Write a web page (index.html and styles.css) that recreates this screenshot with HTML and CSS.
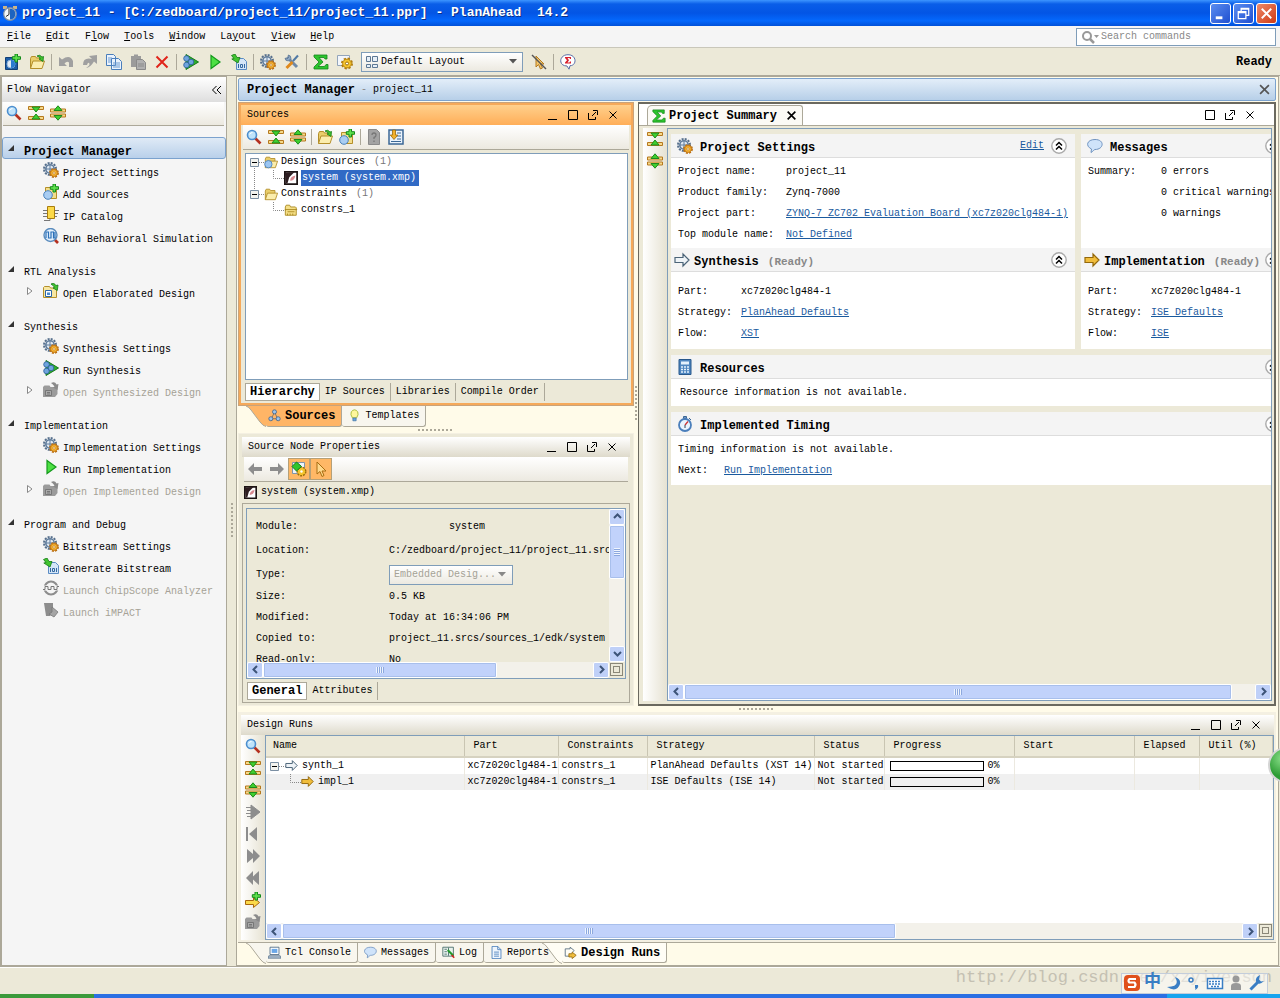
FILE: index.html
```
<!DOCTYPE html>
<html lang="en">
<head>
    <meta charset="UTF-8">
    <meta name="viewport" content="width=device-width, initial-scale=1.0">
    <title>project_11 - PlanAhead 14.2</title>
    <link rel="stylesheet" href="styles.css">
</head>
<body>

<!-- Icon sprite -->
<svg class="sprite" aria-hidden="true">
    <symbol id="i-app" viewBox="0 0 16 16"><path d="M1 1h4v3H1zM11 1h4v3h-4z" fill="#c8b48a"/><circle cx="8" cy="9" r="6.300" fill="#f4f7fa" stroke="#7f8fa3" stroke-width="1.200"/><path d="M8 3.500a5.500 5.500 0 0 1 0 11z" fill="#1d64c0"/><path d="M7 3.500v6l-3 2" fill="none" stroke="#222"/></symbol>
    <symbol id="i-search" viewBox="0 0 16 16"><path d="M9 9l5.500 5.500" stroke="#b5301f" stroke-width="2.600"/><circle cx="6" cy="6" r="4.500" fill="#bfe3fb" stroke="#4d8fcf" stroke-width="1.600"/><path d="M3.500 5.500q1-2 3-2" stroke="#fff" fill="none"/></symbol>
    <symbol id="i-collapse" viewBox="0 0 16 16"><path d="M.5 1.500h15v3h-15zM.5 11.500h15v3h-15z" fill="#f7d98a" stroke="#b5791e"/><path d="M4 2h8L8 7z" fill="#3fcf2f" stroke="#1c8a1c"/><path d="M4 14h8L8 9z" fill="#3fcf2f" stroke="#1c8a1c"/></symbol>
    <symbol id="i-expand" viewBox="0 0 16 16"><path d="M.5 4h15v3h-15zM.5 9h15v3h-15z" fill="#f7d98a" stroke="#b5791e"/><path d="M4 5.500h8L8 .8zM4 10.500h8L8 15.200z" fill="#3fcf2f" stroke="#1c8a1c"/></symbol>
    <symbol id="i-gears" viewBox="0 0 16 16"><circle cx="7" cy="7" r="6" fill="none" stroke="#566f8c" stroke-width="2" stroke-dasharray="2 1.140"/><circle cx="7" cy="7" r="4.200" fill="#dfe8f2" stroke="#5f7c9c" stroke-width="1.600"/><path d="M7 3v8M3 7h8" stroke="#5f7c9c"/><circle cx="11" cy="11" r="4" fill="none" stroke="#b56a10" stroke-width="1.800" stroke-dasharray="2 1.140"/><circle cx="11" cy="11" r="3.400" fill="#f7b733" stroke="#c97b14"/><circle cx="11" cy="11" r="1.200" fill="#fff6dc" stroke="#b56a10" stroke-width=".6"/></symbol>
    <symbol id="i-gearpage" viewBox="0 0 16 16"><path d="M.5 1.500h12v10H.5z" fill="#f3f6fb" stroke="#93a5bb"/><circle cx="10" cy="9.500" r="5" fill="none" stroke="#b07a0c" stroke-width="2" stroke-dasharray="2.200 1.730"/><circle cx="10" cy="9.500" r="4.400" fill="#f5c42c" stroke="#b8860f"/><circle cx="10" cy="9.500" r="1.500" fill="#fff" stroke="#9c6f0a"/></symbol>
    <symbol id="i-plus" viewBox="0 0 16 16"><path d="M10 0h2.500v2.700h3v2.600h-3V8H10V5.300H7.300V2.700H10z" fill="#5ee04c" stroke="#138a1a"/></symbol>
    <symbol id="i-newproj" viewBox="0 0 16 16"><path d="M.5 3.500h12v12H.5z" fill="#1c5da6" stroke="#123f75"/><circle cx="6" cy="10" r="4" fill="#dfeaf5" stroke="#8fb3d8"/><path d="M6 6a4 4 0 0 1 0 8z" fill="#2a7bd0"/><use href="#i-plus"/></symbol>
    <symbol id="i-folder" viewBox="0 0 16 16"><path d="M1.500 14.500V4.500l1-2h4l1 1.500h5v3" fill="#e9cd6a" stroke="#b48f2a"/><path d="M1.500 14.500L4 7h11.500L13 14.500z" fill="#fbedad" stroke="#b48f2a"/></symbol>
    <symbol id="i-folder-src" viewBox="0 0 16 16"><use href="#i-folder"/><circle cx="5" cy="10.500" r="4.200" fill="#9cc6f2" stroke="#4a82bd"/></symbol>
    <symbol id="i-open" viewBox="0 0 16 16"><use href="#i-folder"/><path d="M8 2q3-2 5 1l1.500-.5-.5 5L10 5l1.500-.7Q10 2.500 8 2z" fill="#41c42f" stroke="#157a17" stroke-width=".8"/></symbol>
    <symbol id="i-addsrc" viewBox="0 0 16 16"><path d="M2.500 3.500h9l2 2v9h-11z" fill="#f3dd8b" stroke="#b48f2a"/><circle cx="5" cy="11" r="4.300" fill="#a9cdf2" stroke="#4a82bd"/><use href="#i-plus"/></symbol>
    <symbol id="i-undo" viewBox="0 0 16 16"><path d="M1 3v9h8L6.500 9.500q2.500-3 4.500-1V13h4V7Q12 0 4 5.500z" fill="#a0a0a0"/></symbol>
    <symbol id="i-redo" viewBox="0 0 16 16"><path d="M15 1v9l-3-2.500Q8 14 4 14q5-3 3-5-1-1-2 2H1Q1 3 10 5L7 2z" fill="#a0a0a0"/></symbol>
    <symbol id="i-copy" viewBox="0 0 16 16"><path d="M.5.5h7l2 2v9h-9zM5.500 4.500h7l3 3v8h-10z" fill="#eaf2fc" stroke="#4a7ebb"/><path d="M2 4h4M2 6h3M2 8h3M7 9h7M7 11h7M7 13h7" stroke="#6d9bd1"/></symbol>
    <symbol id="i-paste" viewBox="0 0 16 16"><path d="M1 2h3V.5h4V2h3v11H1z" fill="#9b9b9b"/><path d="M6.500 5.500h6l3 3v7h-9z" fill="#b0b0b0" stroke="#8a8a8a"/><path d="M8 10h6M8 12h6" stroke="#8a8a8a"/></symbol>
    <symbol id="i-delete" viewBox="0 0 16 16"><path d="M2.500 2.500l11 11M13.500 2.500l-11 11" stroke="#e0251b" stroke-width="2"/></symbol>
    <symbol id="i-synth" viewBox="0 0 16 16"><path d="M3 .5L15.500 8 3 15.500z" fill="#2fae2c" stroke="#167a1a"/><g fill="#6fa5de" stroke="#2b5d9c" stroke-width=".8"><circle cx="3.500" cy="4.500" r="2.800"/><circle cx="3.500" cy="11" r="2.800"/><circle cx="8" cy="8" r="2.800"/></g></symbol>
    <symbol id="i-run" viewBox="0 0 16 16"><path d="M4 1.500L13 8l-9 6.500z" fill="#4de043" stroke="#149a1c" stroke-width="1.200"/></symbol>
    <symbol id="i-bits" viewBox="0 0 16 16"><path d="M5.500 4.500h7l3 3v8h-10z" fill="#d5e6f8" stroke="#5b8cc4"/><path d="M7.500 10v4M13.500 10v4M9.500 10.500h2v3h-2z" fill="none" stroke="#34689f"/><path d="M.5 1.500L4 0l2 3.500h3L7 9 .800 5 3 4.500z" fill="#41c42f" stroke="#157a17" stroke-width=".8"/></symbol>
    <symbol id="i-tools" viewBox="0 0 16 16"><path d="M3 3l10 10" stroke="#6f8aa8" stroke-width="3"/><path d="M1 4q0 3 3.500 3L7 4.500Q7 1 4 1l1 2-2 2z" fill="#8ea7c2" stroke="#54708f" stroke-width=".7"/><path d="M14 1.500l-5 5.500" stroke="#5079a5" stroke-width="2"/><path d="M8.500 8l-6 6" stroke="#e08a1c" stroke-width="3"/></symbol>
    <symbol id="i-sigma" viewBox="0 0 16 16"><path d="M1 1h13v4h-2L11 3.500H6L10 8l-5 4.500h6.500L13 10.500h2V15H1v-2l5-5L1 3z" fill="#2dc52d" stroke="#12831b" stroke-width=".8"/></symbol>
    <symbol id="i-layout" viewBox="0 0 16 16"><path d="M2.500 2.500h4v5h-4zM8.500 2.500h5v5h-5zM2.500 10.500h4v3h-4zM8.500 10.500h5v3h-5z" fill="#e8f0f8" stroke="#5d7894"/></symbol>
    <symbol id="i-nocursor" viewBox="0 0 16 16"><path d="M5 2v11l2.500-2.500L9.500 15l2-1-2-4H13z" fill="#f4c76b" stroke="#b37a20"/><path d="M1 1l14 14" stroke="#555" stroke-width="1.400"/></symbol>
    <symbol id="i-feedback" viewBox="0 0 16 16"><path d="M8 .7c9 0 9 11 2 11l-1 3.500L7 12C-2 12-1 .7 8 .7z" fill="#fff" stroke="#5c6fa8"/><path d="M5 3h6v2h-1l-.5-1H7.500L9 6.200 7.500 8.500h2L10 7.500h1v2H5v-1l2-2.300L5 4z" fill="#d9202d"/></symbol>
    <symbol id="i-ip" viewBox="0 0 16 16"><path d="M0 4.500h16M0 7.500h5M11 7.500h4M0 10.500h14" stroke="#777"/><path d="M4.500.5h7v12h-7z" fill="#fbd949" stroke="#a97c0d"/><path d="M1 14.500h6v-2" fill="none" stroke="#777"/></symbol>
    <symbol id="i-sim" viewBox="0 0 16 16"><path d="M11 11l4 4" stroke="#b5301f" stroke-width="2.600"/><circle cx="7.500" cy="7" r="6.500" fill="#e4f1fd" stroke="#5b8cbd" stroke-width="1.400"/><path d="M3 10V4h2.500v6H8V4h2.500v6H12V4" fill="none" stroke="#2b70b8" stroke-width="1.200"/></symbol>
    <symbol id="i-opendes" viewBox="0 0 16 16"><path d="M.5 14.500v-10l1-1h5l1 1.500h6v9.500z" fill="#f7e7a2" stroke="#b48f2a"/><path d="M2.500 7.500h6v6h-6z" fill="#fff" stroke="#2d66a5"/><path d="M4 9.500h3v2.500H4z" fill="#4a8bd0"/><path d="M8 1q3-2 5 1.500l2-.5-.7 5.500L10 5l1.500-.7Q10 2 8 1z" fill="#41c42f" stroke="#157a17" stroke-width=".8"/></symbol>
    <symbol id="i-opengray" viewBox="0 0 16 16"><path d="M0 15V5l1.500-1.500h5l1 1.500h7v7L12 15z" fill="#9b9b9b"/><path d="M2.500 8.500h6v5h-6z" fill="#aaa" stroke="#777"/><path d="M4 10.500h3M4 12h3" stroke="#777"/><path d="M8 1q4-2 5.500 1.500L15.500 2 14.500 8 10 5.500l1.500-1Q10 2 8 1z" fill="#8a8a8a"/></symbol>
    <symbol id="i-chip" viewBox="0 0 16 16"><circle cx="8" cy="8" r="6.500" fill="none" stroke="#8d8d8d" stroke-width="2.200"/><path d="M0 5.500h16v5H0z" fill="#f5f5f5"/><path d="M0 9.500h2v-3h3v3h3v-3h3v3h3v-3h2" fill="none" stroke="#777"/></symbol>
    <symbol id="i-impact" viewBox="0 0 16 16"><path d="M1 1h9v9l-3 4H3z" fill="#8d8d8d"/><path d="M9 5l6 5-4 5-5-3 3-2z" fill="#a5a5a5" stroke="#777" stroke-width=".8"/></symbol>
    <symbol id="i-help" viewBox="0 0 16 16"><path d="M2.500.5h8l3 3v12h-11z" fill="#a3a3a3" stroke="#8a8a8a"/><path d="M6 6q0-2 2-2t2 2-2 2.500V10M8 11.500v1.500" fill="none" stroke="#777" stroke-width="1.300"/></symbol>
    <symbol id="i-autoload" viewBox="0 0 16 16"><path d="M1 1h14v14H1z" fill="#e9f2fb" stroke="#3c6896" stroke-width="1.500"/><path d="M9 4h4M9 7h4M9 10h4M3 12.500h10" stroke="#3c6896"/><path d="M4.500 1h3v5h2.300L6 10.500 2.300 6h2.200z" fill="#f2b12c" stroke="#9b6b0d" stroke-width=".8"/></symbol>
    <symbol id="i-xmp" viewBox="0 0 16 16"><path d="M1 1h14v14H1z" fill="#fff" stroke="#1d1414" stroke-width="2"/><path d="M1 2l11-1-6 6-2 7H2z" fill="#2d1d20"/><path d="M7 11q0-5 6-6-1 6-6 6z" fill="#d98a90"/></symbol>
    <symbol id="i-constr" viewBox="0 0 16 16"><path d="M1.500 14V4.500l1-2h4l1 2h5.500l1 1V14z" fill="#f5df87" stroke="#a8871d"/><path d="M1 7.500h14M4 10h8M4 14v-2M7 14v-2M10 14v-2" stroke="#a8871d"/></symbol>
    <symbol id="i-tree" viewBox="0 0 16 16"><path d="M8 4L4 12h8z" fill="none" stroke="#666"/><g fill="#9cc3ec" stroke="#41648a"><circle cx="8" cy="3.500" r="2.500"/><circle cx="3.500" cy="12" r="2.500"/><circle cx="12.500" cy="12" r="2.500"/></g></symbol>
    <symbol id="i-bulb" viewBox="0 0 16 16"><path d="M5.500 11Q2.500 7 4 3.500 8-1.500 12 3.500 13.500 7 10.500 11z" fill="#fff79c" stroke="#9db32c"/><path d="M6 11h4v3.500H6z" fill="#6aa7df" stroke="#3b6d9e" stroke-width=".8"/></symbol>
    <symbol id="i-left" viewBox="0 0 16 16"><path d="M1 8l6-6v4h8v4H7v4z" fill="#8d8d8d"/></symbol>
    <symbol id="i-right" viewBox="0 0 16 16"><path d="M15 8L9 2v4H1v4h8v4z" fill="#8d8d8d"/></symbol>
    <symbol id="i-autofit" viewBox="0 0 16 16"><path d="M1.500 1.500h12v11h-12z" fill="#eef4fa" stroke="#8095ab"/><circle cx="10.500" cy="10.500" r="4.300" fill="#f5c42c" stroke="#9c6f0a" stroke-width="1.400" stroke-dasharray="2 1"/><circle cx="10.500" cy="10.500" r="1.200" fill="#fff"/><path d="M5.500 1l5 4.500-5 4.500L1 5.500z" fill="#31c52b" stroke="#157a17"/></symbol>
    <symbol id="i-cursor" viewBox="0 0 16 16"><path d="M4 1v12l3-2.500 2 5 2-1-2-4.500h4z" fill="#ffd98c" stroke="#a86d12"/></symbol>
    <symbol id="i-arrow-w" viewBox="0 0 16 16"><path d="M1 5.500h8V2l6 6-6 6v-3.500H1z" fill="#eef3f7" stroke="#4b6478" stroke-width="1.200"/></symbol>
    <symbol id="i-arrow-y" viewBox="0 0 16 16"><path d="M1 5.500h8V2l6 6-6 6v-3.500H1z" fill="#f0bd3c" stroke="#94690d" stroke-width="1.200"/></symbol>
    <symbol id="i-newrun" viewBox="0 0 16 16"><path d="M.5 8.500h8V5.500l6 5-6 5v-3h-8z" fill="#fbd949" stroke="#a9660d"/><use href="#i-plus"/></symbol>
    <symbol id="i-bubble" viewBox="0 0 16 16"><path d="M8 1.500c10 0 9 10 0 10-1 0-2 2-4 3l.5-3.500C-2 8 0 1.500 8 1.500z" fill="#cfe3fa" stroke="#6f93c0"/></symbol>
    <symbol id="i-calc" viewBox="0 0 16 16"><path d="M2 .5h12v15H2z" fill="#4f86c0" stroke="#28588c"/><path d="M4 2.500h8v3H4z" fill="#e4f1fd"/><path d="M4 8h8M4 10.500h8M4 13h8" stroke="#e4f1fd" stroke-width="1.500" stroke-dasharray="2 1"/></symbol>
    <symbol id="i-clock" viewBox="0 0 16 16"><path d="M6.500.5h3v2h-3zM12 2l2 2" fill="#6f93c0" stroke="#3c6896"/><circle cx="8" cy="9" r="6" fill="#e9f4fe" stroke="#4a7ebb" stroke-width="1.800"/><path d="M8 9l3-3.500" stroke="#c33" stroke-width="1.300"/><path d="M8 9v3" stroke="#345"/></symbol>
    <symbol id="i-steps" viewBox="0 0 16 16"><path d="M6 1l9 7-9 7zM1 3.500h5M2 6.500h4M1 9.500h5M2 12.500h4" fill="#8d8d8d" stroke="#8d8d8d"/></symbol>
    <symbol id="i-first" viewBox="0 0 16 16"><path d="M1 1h2v14H1zM12 1v14L4 8z" fill="#8d8d8d"/></symbol>
    <symbol id="i-fwd" viewBox="0 0 16 16"><path d="M2 1l6 5V1l7 7-7 7v-5l-6 5z" fill="#8d8d8d"/></symbol>
    <symbol id="i-back" viewBox="0 0 16 16"><path d="M14 1L8 6.500V1L1 8l7 7V9.500l6 5.500z" fill="#8d8d8d"/></symbol>
    <symbol id="i-console" viewBox="0 0 16 16"><path d="M2.500 1.500h11v9h-11z" fill="#fff" stroke="#44617f"/><path d="M4.500 3.500h7v5h-7z" fill="#6aa7e8"/><path d="M1 12h14l1 3H0z" fill="#aebfd0" stroke="#44617f" stroke-width=".8"/></symbol>
    <symbol id="i-log" viewBox="0 0 16 16"><path d="M1 1.500h13v11H1z" fill="#e9f2ee" stroke="#3c6260"/><path d="M3 4h3M3 7h3M3 10h3M8 2v10" stroke="#3c6260"/><path d="M7 5l7 7" stroke="#249a2c" stroke-width="2.500"/><path d="M12 11l3 3.500" stroke="#c22" stroke-width="2"/></symbol>
    <symbol id="i-report" viewBox="0 0 16 16"><path d="M2.500.5h7l4 4v11h-11z" fill="#eef5fd" stroke="#3f78b8"/><path d="M9.500.5v4h4M5 7.500h6M5 10h6M5 12.500h6" fill="none" stroke="#3f78b8"/></symbol>
    <symbol id="i-runs" viewBox="0 0 16 16"><path d="M1.500 3.500h6v-2l5 4-2 2M1.500 3.500v9h5" fill="none" stroke="#4b6478"/><path d="M6 9.500h4v-2l5 4-5 4v-2H6z" fill="#f0bd3c" stroke="#94690d"/></symbol>
    <symbol id="i-min" viewBox="0 0 10 10"><path d="M0 9.500h9" stroke="#000"/></symbol>
    <symbol id="i-max" viewBox="0 0 10 10"><path d="M.5.5h9v9h-9z" fill="none" stroke="#000"/></symbol>
    <symbol id="i-float" viewBox="0 0 10 10"><path d="M.5 3v6.500h7V7M4 6l4-4M5 .5h4.500V5" fill="none" stroke="#000"/></symbol>
    <symbol id="i-close" viewBox="0 0 10 10"><path d="M1.500 1.500l7 7M8.500 1.500l-7 7" stroke="#000"/></symbol>
    <symbol id="i-chev" viewBox="0 0 16 16"><circle cx="8" cy="8" r="7.200" fill="#fff" stroke="#aaa" stroke-width="1.400"/><path d="M5 7.500l3-3 3 3M5 11.500l3-3 3 3" fill="none" stroke="#000" stroke-width="1.500"/></symbol>
    <symbol id="i-slant" viewBox="0 0 20 21"><path d="M0 0q3 1 5 4l9 12q3 4 6 4.500V0z" fill="var(--tab-fill)"/><path d="M0 0q3 1 5 4l9 12q3 4 6 4.500" fill="none" stroke="#aca899"/></symbol>
</svg>

<div class="app">

    <header class="titlebar">
        <svg class="ic"><use href="#i-app"/></svg>
        <h1>project_11 - [C:/zedboard/project_11/project_11.ppr] - PlanAhead&nbsp; 14.2</h1>
        <button class="win-btn" aria-label="Minimize"><svg viewBox="0 0 20 20"><path d="M5 13h7v3H5z" fill="#fff"/></svg></button>
        <button class="win-btn" aria-label="Restore"><svg viewBox="0 0 20 20"><path d="M7.500 8V4.500h8V12H12M4.500 8h8v7.500h-8zM4.500 9h8M7.500 5.500h8" fill="none" stroke="#fff" stroke-width="1.300"/></svg></button>
        <button class="win-btn win-close" aria-label="Close"><svg viewBox="0 0 20 20"><path d="M5 5l10 10M15 5L5 15" stroke="#fff" stroke-width="2"/></svg></button>
    </header>

    <nav class="menubar">
        <button><u>F</u>ile</button>
        <button><u>E</u>dit</button>
        <button>F<u>l</u>ow</button>
        <button><u>T</u>ools</button>
        <button><u>W</u>indow</button>
        <button>La<u>y</u>out</button>
        <button><u>V</u>iew</button>
        <button><u>H</u>elp</button>
        <label class="search">
            <svg viewBox="0 0 20 14"><circle cx="6" cy="6" r="4" fill="none" stroke="#999" stroke-width="2"/><path d="M9 9l4 4" stroke="#999" stroke-width="2.500"/><path d="M13 5h5l-2.500 3z" fill="#999"/></svg>
            <input type="text" placeholder="Search commands" aria-label="Search commands">
        </label>
    </nav>

    <div class="toolbar">
        <button aria-label="New project"><svg class="ic"><use href="#i-newproj"/></svg></button>
        <button aria-label="Open project"><svg class="ic"><use href="#i-open"/></svg></button>
        <span class="sep"></span>
        <button aria-label="Undo"><svg class="ic"><use href="#i-undo"/></svg></button>
        <button aria-label="Redo"><svg class="ic"><use href="#i-redo"/></svg></button>
        <button aria-label="Copy"><svg class="ic"><use href="#i-copy"/></svg></button>
        <button aria-label="Paste"><svg class="ic"><use href="#i-paste"/></svg></button>
        <button aria-label="Delete"><svg class="ic"><use href="#i-delete"/></svg></button>
        <span class="sep"></span>
        <button aria-label="Run synthesis"><svg class="ic"><use href="#i-synth"/></svg></button>
        <button aria-label="Run implementation"><svg class="ic"><use href="#i-run"/></svg></button>
        <button aria-label="Generate bitstream"><svg class="ic"><use href="#i-bits"/></svg></button>
        <span class="sep"></span>
        <button aria-label="Project settings"><svg class="ic"><use href="#i-gears"/></svg></button>
        <button aria-label="Options"><svg class="ic"><use href="#i-tools"/></svg></button>
        <span class="sep"></span>
        <button aria-label="Project summary"><svg class="ic"><use href="#i-sigma"/></svg></button>
        <button aria-label="Layout settings"><svg class="ic"><use href="#i-gearpage"/></svg></button>
        <label class="combo layout-combo">
            <svg class="ic"><use href="#i-layout"/></svg>
            <select aria-label="Layout"><option>Default Layout</option></select>
            <svg class="arrow" viewBox="0 0 8 5"><path d="M0 0h8L4 4.500z" fill="#555"/></svg>
        </label>
        <button aria-label="Unselect"><svg class="ic"><use href="#i-nocursor"/></svg></button>
        <span class="sep"></span>
        <button aria-label="Feedback"><svg class="ic"><use href="#i-feedback"/></svg></button>
        <span class="ready">Ready</span>
    </div>

    <main class="main">

        <!-- Flow Navigator -->
        <aside class="navigator">
            <div class="nav-head"><h2>Flow Navigator</h2><button aria-label="Hide navigator"><svg viewBox="0 0 10 10"><path d="M4.500 1l-4 4 4 4M9 1L5 5l4 4" fill="none" stroke="#000"/></svg></button></div>
            <div class="nav-tools">
                <button aria-label="Search"><svg class="ic"><use href="#i-search"/></svg></button>
                <button aria-label="Collapse all"><svg class="ic"><use href="#i-collapse"/></svg></button>
                <button aria-label="Expand all"><svg class="ic"><use href="#i-expand"/></svg></button>
            </div>
            <section class="nav-group">
                <h3 class="selected"><svg class="tri" viewBox="0 0 6 6"><path d="M6 0v6H0z"/></svg><span>Project Manager</span></h3>
                <a href="#"><svg class="ic"><use href="#i-gears"/></svg><span>Project Settings</span></a>
                <a href="#"><svg class="ic"><use href="#i-addsrc"/></svg><span>Add Sources</span></a>
                <a href="#"><svg class="ic"><use href="#i-ip"/></svg><span>IP Catalog</span></a>
                <a href="#"><svg class="ic"><use href="#i-sim"/></svg><span>Run Behavioral Simulation</span></a>
            </section>
            <section class="nav-group">
                <h3><svg class="tri" viewBox="0 0 6 6"><path d="M6 0v6H0z"/></svg><span>RTL Analysis</span></h3>
                <a href="#" class="closed"><svg class="exp" viewBox="0 0 6 8"><path d="M.5.5L5 4 .5 7.500z"/></svg><svg class="ic"><use href="#i-opendes"/></svg><span>Open Elaborated Design</span></a>
            </section>
            <section class="nav-group">
                <h3><svg class="tri" viewBox="0 0 6 6"><path d="M6 0v6H0z"/></svg><span>Synthesis</span></h3>
                <a href="#"><svg class="ic"><use href="#i-gears"/></svg><span>Synthesis Settings</span></a>
                <a href="#"><svg class="ic"><use href="#i-synth"/></svg><span>Run Synthesis</span></a>
                <a href="#" class="closed disabled"><svg class="exp" viewBox="0 0 6 8"><path d="M.5.5L5 4 .5 7.500z"/></svg><svg class="ic"><use href="#i-opengray"/></svg><span>Open Synthesized Design</span></a>
            </section>
            <section class="nav-group">
                <h3><svg class="tri" viewBox="0 0 6 6"><path d="M6 0v6H0z"/></svg><span>Implementation</span></h3>
                <a href="#"><svg class="ic"><use href="#i-gears"/></svg><span>Implementation Settings</span></a>
                <a href="#"><svg class="ic"><use href="#i-run"/></svg><span>Run Implementation</span></a>
                <a href="#" class="closed disabled"><svg class="exp" viewBox="0 0 6 8"><path d="M.5.5L5 4 .5 7.500z"/></svg><svg class="ic"><use href="#i-opengray"/></svg><span>Open Implemented Design</span></a>
            </section>
            <section class="nav-group">
                <h3><svg class="tri" viewBox="0 0 6 6"><path d="M6 0v6H0z"/></svg><span>Program and Debug</span></h3>
                <a href="#"><svg class="ic"><use href="#i-gears"/></svg><span>Bitstream Settings</span></a>
                <a href="#"><svg class="ic"><use href="#i-bits"/></svg><span>Generate Bitstream</span></a>
                <a href="#" class="disabled"><svg class="ic"><use href="#i-chip"/></svg><span>Launch ChipScope Analyzer</span></a>
                <a href="#" class="disabled"><svg class="ic"><use href="#i-impact"/></svg><span>Launch iMPACT</span></a>
            </section>
        </aside>

        <div class="splitter"><span class="grip grip-v"></span></div>

        <div class="workspace">
            <div class="view-bar">
                <strong>Project Manager</strong><span class="muted">-</span><span>project_11</span>
                <button aria-label="Close view"><svg viewBox="0 0 10 10"><path d="M1 1l8 8M9 1L1 9" stroke="#555" stroke-width="1.500"/></svg></button>
            </div>

            <div class="upper">
                <div class="left-col">

                    <!-- Sources -->
                    <section class="panel sources">
                        <div class="panel-head"><h2>Sources</h2>
                            <button aria-label="Minimize"><svg><use href="#i-min"/></svg></button>
                            <button aria-label="Maximize"><svg><use href="#i-max"/></svg></button>
                            <button aria-label="Float"><svg><use href="#i-float"/></svg></button>
                            <button aria-label="Close"><svg><use href="#i-close"/></svg></button>
                        </div>
                        <div class="panel-tools">
                            <button aria-label="Search"><svg class="ic"><use href="#i-search"/></svg></button>
                            <button aria-label="Collapse all"><svg class="ic"><use href="#i-collapse"/></svg></button>
                            <button aria-label="Expand all"><svg class="ic"><use href="#i-expand"/></svg></button>
                            <span class="sep"></span>
                            <button aria-label="Open"><svg class="ic"><use href="#i-open"/></svg></button>
                            <button aria-label="Add sources"><svg class="ic"><use href="#i-addsrc"/></svg></button>
                            <span class="sep"></span>
                            <button aria-label="Help"><svg class="ic"><use href="#i-help"/></svg></button>
                            <button aria-label="Auto scroll"><svg class="ic"><use href="#i-autoload"/></svg></button>
                        </div>
                        <ul class="tree">
                            <li><svg class="lead" viewBox="0 0 17 16"><path d="M5.500 12v4M10 8.500h7" class="dots"/><path d="M1.500 4.500h8v8h-8z" fill="#f3f3ee" stroke="#7b8fa3"/><path d="M3 8.500h5" stroke="#000"/></svg><svg class="ic14"><use href="#i-folder-src"/></svg>Design Sources <i>(1)</i></li>
                            <li><svg class="lead lead-2" viewBox="0 0 37 16"><path d="M5.500 0v16M24.500 0v8.500H37" class="dots"/></svg><svg class="ic14"><use href="#i-xmp"/></svg><b>system (system.xmp)</b></li>
                            <li><svg class="lead" viewBox="0 0 17 16"><path d="M5.500 0v4M10 8.500h7" class="dots"/><path d="M1.500 4.500h8v8h-8z" fill="#f3f3ee" stroke="#7b8fa3"/><path d="M3 8.500h5" stroke="#000"/></svg><svg class="ic14"><use href="#i-folder"/></svg>Constraints <i>(1)</i></li>
                            <li><svg class="lead lead-2" viewBox="0 0 37 16"><path d="M24.500 0v8.500H37" class="dots"/></svg><svg class="ic14"><use href="#i-constr"/></svg>constrs_1</li>
                        </ul>
                        <div class="subtabs">
                            <button class="active">Hierarchy</button><button>IP Sources</button><button>Libraries</button><button>Compile Order</button>
                        </div>
                    </section>
                    <div class="tabs dock-tabs">
                        <button class="tab active"><svg class="slant"><use href="#i-slant"/></svg><span><svg class="ic12"><use href="#i-tree"/></svg>Sources</span></button>
                        <button class="tab"><span><svg class="ic12"><use href="#i-bulb"/></svg>Templates</span></button>
                    </div>
                    <div class="row-grip"><span class="grip"></span></div>

                    <!-- Source Node Properties -->
                    <section class="panel props">
                        <div class="panel-head"><h2>Source Node Properties</h2>
                            <button aria-label="Minimize"><svg><use href="#i-min"/></svg></button>
                            <button aria-label="Maximize"><svg><use href="#i-max"/></svg></button>
                            <button aria-label="Float"><svg><use href="#i-float"/></svg></button>
                            <button aria-label="Close"><svg><use href="#i-close"/></svg></button>
                        </div>
                        <div class="panel-tools">
                            <button aria-label="Back"><svg class="ic"><use href="#i-left"/></svg></button>
                            <button aria-label="Forward"><svg class="ic"><use href="#i-right"/></svg></button>
                            <button class="on" aria-label="Fit selection"><svg class="ic"><use href="#i-autofit"/></svg></button>
                            <button class="on" aria-label="Select"><svg class="ic"><use href="#i-cursor"/></svg></button>
                        </div>
                        <div class="props-name"><svg class="ic12"><use href="#i-xmp"/></svg>system (system.xmp)</div>
                        <div class="props-box">
                            <div class="scroll-area">
                                <dl class="props-list">
                                    <dt>Module:</dt><dd class="module">system</dd>
                                    <dt>Location:</dt><dd>C:/zedboard/project_11/project_11.srcs</dd>
                                    <dt>Type:</dt><dd><label class="combo type-combo"><select disabled aria-label="Type"><option>Embedded Desig...</option></select><svg class="arrow" viewBox="0 0 8 5"><path d="M0 0h8L4 4.500z" fill="#888"/></svg></label></dd>
                                    <dt>Size:</dt><dd>0.5 KB</dd>
                                    <dt>Modified:</dt><dd>Today at 16:34:06 PM</dd>
                                    <dt>Copied to:</dt><dd>project_11.srcs/sources_1/edk/system</dd>
                                    <dt>Read-only:</dt><dd>No</dd>
                                </dl>
                                <div class="vscroll">
                                    <button aria-label="Scroll up"><svg viewBox="0 0 9 9"><path d="M1 6l3.500-3.500L8 6"/></svg></button>
                                    <div class="track"><div class="thumb" style="height:45%"></div></div>
                                    <button aria-label="Scroll down"><svg viewBox="0 0 9 9"><path d="M1 3l3.500 3.500L8 3"/></svg></button>
                                </div>
                                <div class="hscroll">
                                    <button aria-label="Scroll left"><svg viewBox="0 0 9 9"><path d="M6 1L2.500 4.500 6 8"/></svg></button>
                                    <div class="track"><div class="thumb" style="width:71%"></div></div>
                                    <button aria-label="Scroll right"><svg viewBox="0 0 9 9"><path d="M3 1l3.500 3.500L3 8"/></svg></button>
                                </div>
                                <span class="corner"></span>
                            </div>
                            <div class="subtabs">
                                <button class="active">General</button><button>Attributes</button>
                            </div>
                        </div>
                    </section>
                </div>

                <div class="col-grip"><span class="grip grip-v"></span></div>

                <!-- Project Summary -->
                <section class="summary">
                    <div class="summary-head">
                        <div class="summary-tab"><svg class="ic14"><use href="#i-sigma"/></svg><h2>Project Summary</h2><button aria-label="Close tab"><svg viewBox="0 0 10 10"><path d="M1.500 1.500l7 7M8.500 1.500l-7 7" stroke="#000" stroke-width="1.500"/></svg></button></div>
                        <button aria-label="Maximize"><svg><use href="#i-max"/></svg></button>
                        <button aria-label="Float"><svg><use href="#i-float"/></svg></button>
                        <button aria-label="Close"><svg><use href="#i-close"/></svg></button>
                    </div>
                    <div class="summary-main">
                        <div class="side-tools">
                            <button aria-label="Collapse all"><svg class="ic"><use href="#i-collapse"/></svg></button>
                            <button aria-label="Expand all"><svg class="ic"><use href="#i-expand"/></svg></button>
                        </div>
                        <div class="summary-box">
                            <div class="cards">
                                <section class="card">
                                    <header><svg class="ic"><use href="#i-gears"/></svg><h3>Project Settings</h3><a href="#">Edit</a><button aria-label="Collapse"><svg class="ic"><use href="#i-chev"/></svg></button></header>
                                    <dl class="wide">
                                        <dt>Project name:</dt><dd>project_11</dd>
                                        <dt>Product family:</dt><dd>Zynq-7000</dd>
                                        <dt>Project part:</dt><dd><a href="#">ZYNQ-7 ZC702 Evaluation Board (xc7z020clg484-1)</a></dd>
                                        <dt>Top module name:</dt><dd><a href="#">Not Defined</a></dd>
                                    </dl>
                                </section>
                                <section class="card">
                                    <header><svg class="ic"><use href="#i-bubble"/></svg><h3>Messages</h3><button aria-label="Collapse"><svg class="ic"><use href="#i-chev"/></svg></button></header>
                                    <dl class="counts">
                                        <dt>Summary:</dt><dd>0 errors</dd>
                                        <dt></dt><dd>0 critical warnings</dd>
                                        <dt></dt><dd>0 warnings</dd>
                                    </dl>
                                </section>
                                <section class="card run-card">
                                    <header><svg class="ic"><use href="#i-arrow-w"/></svg><h3>Synthesis</h3><em>(Ready)</em><button aria-label="Collapse"><svg class="ic"><use href="#i-chev"/></svg></button></header>
                                    <dl>
                                        <dt>Part:</dt><dd>xc7z020clg484-1</dd>
                                        <dt>Strategy:</dt><dd><a href="#">PlanAhead Defaults</a></dd>
                                        <dt>Flow:</dt><dd><a href="#">XST</a></dd>
                                    </dl>
                                </section>
                                <section class="card run-card">
                                    <header><svg class="ic"><use href="#i-arrow-y"/></svg><h3>Implementation</h3><em>(Ready)</em><button aria-label="Collapse"><svg class="ic"><use href="#i-chev"/></svg></button></header>
                                    <dl>
                                        <dt>Part:</dt><dd>xc7z020clg484-1</dd>
                                        <dt>Strategy:</dt><dd><a href="#">ISE Defaults</a></dd>
                                        <dt>Flow:</dt><dd><a href="#">ISE</a></dd>
                                    </dl>
                                </section>
                                <section class="card full">
                                    <header><svg class="ic"><use href="#i-calc"/></svg><h3>Resources</h3><button aria-label="Collapse"><svg class="ic"><use href="#i-chev"/></svg></button></header>
                                    <p>Resource information is not available.</p>
                                </section>
                                <section class="card full timing">
                                    <header><svg class="ic"><use href="#i-clock"/></svg><h3>Implemented Timing</h3><button aria-label="Collapse"><svg class="ic"><use href="#i-chev"/></svg></button></header>
                                    <p>Timing information is not available.</p>
                                    <p class="next"><span>Next:</span><a href="#">Run Implementation</a></p>
                                </section>
                            </div>
                            <div class="hscroll">
                                <button aria-label="Scroll left"><svg viewBox="0 0 9 9"><path d="M6 1L2.500 4.500 6 8"/></svg></button>
                                <div class="track"><div class="thumb" style="width:96%"></div></div>
                                <button aria-label="Scroll right"><svg viewBox="0 0 9 9"><path d="M3 1l3.500 3.500L3 8"/></svg></button>
                            </div>
                        </div>
                    </div>
                </section>
            </div>

            <div class="row-grip"><span class="grip"></span></div>

            <!-- Design Runs -->
            <section class="runs">
                <div class="panel-head"><h2>Design Runs</h2>
                    <button aria-label="Minimize"><svg><use href="#i-min"/></svg></button>
                    <button aria-label="Maximize"><svg><use href="#i-max"/></svg></button>
                    <button aria-label="Float"><svg><use href="#i-float"/></svg></button>
                    <button aria-label="Close"><svg><use href="#i-close"/></svg></button>
                </div>
                <div class="runs-main">
                    <div class="side-tools">
                        <button aria-label="Search"><svg class="ic"><use href="#i-search"/></svg></button>
                        <button aria-label="Collapse all"><svg class="ic"><use href="#i-collapse"/></svg></button>
                        <button aria-label="Expand all"><svg class="ic"><use href="#i-expand"/></svg></button>
                        <button aria-label="Launch step"><svg class="ic"><use href="#i-steps"/></svg></button>
                        <button aria-label="First"><svg class="ic"><use href="#i-first"/></svg></button>
                        <button aria-label="Forward"><svg class="ic"><use href="#i-fwd"/></svg></button>
                        <button aria-label="Back"><svg class="ic"><use href="#i-back"/></svg></button>
                        <button aria-label="New run"><svg class="ic"><use href="#i-newrun"/></svg></button>
                        <button aria-label="Open run"><svg class="ic"><use href="#i-opengray"/></svg></button>
                    </div>
                    <div class="runs-box">
                        <div class="table-wrap">
                            <table>
                                <colgroup><col class="c-name"><col class="c-part"><col class="c-con"><col class="c-strat"><col class="c-status"><col class="c-prog"><col class="c-start"><col class="c-ela"><col></colgroup>
                                <thead>
                                    <tr><th>Name</th><th>Part</th><th>Constraints</th><th>Strategy</th><th>Status</th><th>Progress</th><th>Start</th><th>Elapsed</th><th>Util (%)</th></tr>
                                </thead>
                                <tbody>
                                    <tr>
                                        <td><div class="cell"><svg class="lead" viewBox="0 0 17 16"><path d="M10 8.500h7" class="dots"/><path d="M1.500 4.500h8v8h-8z" fill="#f3f3ee" stroke="#7b8fa3"/><path d="M3 8.500h5" stroke="#000"/></svg><svg class="ic12"><use href="#i-arrow-w"/></svg>synth_1</div></td>
                                        <td>xc7z020clg484-1</td><td>constrs_1</td><td>PlanAhead Defaults (XST 14)</td><td>Not started</td>
                                        <td><div class="cell"><span class="bar"></span>0%</div></td><td></td><td></td><td></td>
                                    </tr>
                                    <tr>
                                        <td><div class="cell"><svg class="lead lead-run" viewBox="0 0 33 16"><path d="M21.500 0v8.500H33" class="dots"/></svg><svg class="ic12"><use href="#i-arrow-y"/></svg>impl_1</div></td>
                                        <td>xc7z020clg484-1</td><td>constrs_1</td><td>ISE Defaults (ISE 14)</td><td>Not started</td>
                                        <td><div class="cell"><span class="bar"></span>0%</div></td><td></td><td></td><td></td>
                                    </tr>
                                </tbody>
                            </table>
                        </div>
                        <div class="hscroll-row">
                            <div class="hscroll">
                                <button aria-label="Scroll left"><svg viewBox="0 0 9 9"><path d="M6 1L2.500 4.500 6 8"/></svg></button>
                                <div class="track"><div class="thumb" style="width:64%"></div></div>
                                <button aria-label="Scroll right"><svg viewBox="0 0 9 9"><path d="M3 1l3.500 3.500L3 8"/></svg></button>
                            </div>
                            <span class="corner"></span>
                        </div>
                    </div>
                </div>
            </section>
            <div class="tabs bottom-tabs">
                <button class="tab"><svg class="slant"><use href="#i-slant"/></svg><span><svg class="ic12"><use href="#i-console"/></svg>Tcl Console</span></button>
                <button class="tab"><span><svg class="ic12"><use href="#i-bubble"/></svg>Messages</span></button>
                <button class="tab"><span><svg class="ic12"><use href="#i-log"/></svg>Log</span></button>
                <button class="tab reports"><span><svg class="ic12"><use href="#i-report"/></svg>Reports</span></button>
                <button class="tab active"><svg class="slant"><use href="#i-slant"/></svg><span><svg class="ic12"><use href="#i-runs"/></svg>Design Runs</span></button>
            </div>
        </div>
    </main>

    <footer class="statusbar">
        <span class="watermark">http://blog.csdn.net/xzyiverson</span>
        <div class="tray">
            <svg viewBox="0 0 18 18"><rect x="1" y="1" width="16" height="16" rx="4" fill="#e0501c"/><path d="M13 5H6.500q-2 2 0 3.500h5q2 2 0 4.500H5" fill="none" stroke="#fff" stroke-width="2.200"/></svg>
            <span lang="zh">中</span>
            <svg viewBox="0 0 18 18"><path d="M11 3q6 10-8 10 10 6 13-3 1-5-5-7z" fill="#3a7ec4"/></svg>
            <svg viewBox="0 0 18 18"><circle cx="6" cy="6" r="2" fill="none" stroke="#3a7ec4" stroke-width="1.500"/><path d="M10 11h3q1 3-3 5 1-2 0-2z" fill="#3a7ec4"/></svg>
            <svg viewBox="0 0 18 18"><path d="M1.500 4.500h15v10h-15z" fill="#fff" stroke="#3a7ec4" stroke-width="1.500"/><path d="M3 7.500h12M3 10h12M5 12.500h8" stroke="#3a7ec4" stroke-width="1.300" stroke-dasharray="2 1"/></svg>
            <svg viewBox="0 0 18 18"><circle cx="9" cy="5" r="3.500" fill="#999"/><path d="M4 16v-4q0-3 5-3t5 3v4z" fill="#999"/></svg>
            <svg viewBox="0 0 18 18"><path d="M2.500 15.500L10 8" stroke="#3a7ec4" stroke-width="3"/><path d="M12 1q-5 2-4 6.500Q11 12 16 7l-3 .5-2-2z" fill="#3a7ec4"/></svg>
        </div>
    </footer>
    <div class="taskbar"><span class="start"></span><span class="clock"></span></div>

    <span class="ball"></span>
</div>

</body>
</html>
```
FILE: styles.css
```
* {
    box-sizing: border-box;
}

body {
    margin: 0;
    font-family: "Liberation Mono", "Noto Sans CJK SC", monospace;
    font-size: 10px;
    line-height: 16px;
    color: #000;
    background: #ece9d8;
}

h1, h2, h3, p, ul, dl, dd {
    margin: 0;
    padding: 0;
    font-size: inherit;
    font-weight: normal;
}

button, input, select {
    margin: 0;
    padding: 0;
    border: none;
    background: none;
    font: inherit;
    color: inherit;
}

button {
    display: flex;
    align-items: center;
    justify-content: center;
}

svg {
    flex: none;
    display: block;
}

.sprite {
    position: absolute;
    width: 0;
    height: 0;
}

.ic {
    width: 16px;
    height: 16px;
}

.ic14 {
    width: 14px;
    height: 14px;
}

.ic12 {
    width: 13px;
    height: 13px;
}

.app {
    position: relative;
    display: flex;
    flex-direction: column;
    height: 100vh;
    overflow: hidden;
}

/* title bar */
.titlebar {
    display: flex;
    align-items: center;
    gap: 2px;
    height: 26px;
    flex: none;
    padding: 0 3px 0 2px;
    background: linear-gradient(#3d95ff 0, #0a5ee8 4px, #0355e5 50%, #0468fd 80%, #0251d8 100%);
}

.titlebar h1 {
    flex: 1;
    margin-left: 2px;
    font-size: 13px;
    font-weight: bold;
    color: #fff;
    text-shadow: 1px 1px #0a2f8a;
    white-space: nowrap;
}

.win-btn {
    width: 21px;
    height: 21px;
    border: 1px solid #fff;
    border-radius: 3px;
    background: linear-gradient(135deg, #5a8df0, #1f4fd0);
}

.win-btn svg {
    width: 19px;
    height: 19px;
}

.win-close {
    background: linear-gradient(135deg, #ee8a6a, #cf3a14);
}

/* menu bar */
.menubar {
    display: flex;
    align-items: center;
    gap: 15px;
    height: 22px;
    flex: none;
    padding: 0 4px 0 7px;
    background: #f5f5f5;
    border-bottom: 1px solid #c9c7ba;
}

.search {
    display: flex;
    align-items: center;
    width: 200px;
    height: 18px;
    margin-left: auto;
    padding-left: 4px;
    background: #fff;
    border: 1px solid #7f9db9;
}

.search svg {
    width: 20px;
    height: 14px;
}

.search input {
    flex: 1;
    min-width: 0;
    outline: none;
}

.search input::placeholder {
    color: #888;
    opacity: 1;
}

/* main toolbar */
.toolbar {
    display: flex;
    align-items: center;
    height: 28px;
    flex: none;
    padding: 0 8px 0 1px;
    border-bottom: 1px solid #aca899;
}

.toolbar button {
    width: 24px;
    height: 24px;
}

.sep {
    width: 1px;
    height: 16px;
    margin: 0 2px;
    background: #aca899;
}

.combo {
    display: flex;
    align-items: center;
    border: 1px solid #7f9db9;
    background: linear-gradient(#fff, #ece9e0);
}

.combo select {
    flex: 1;
    min-width: 0;
    appearance: none;
    opacity: 1;
}

.combo .arrow {
    width: 8px;
    height: 5px;
}

.layout-combo {
    width: 162px;
    height: 20px;
    margin: 0 4px;
    padding: 0 5px 0 2px;
    gap: 1px;
}

.ready {
    margin-left: auto;
    font-size: 12px;
    font-weight: bold;
}

/* main area */
.main {
    flex: 1;
    display: flex;
    min-height: 0;
    border-bottom: 1px solid #aca899;
}

.navigator {
    width: 227px;
    flex: none;
    overflow: hidden;
    background: #f5f5f5;
    border: 1px solid #aca899;
    border-left-width: 2px;
}

.nav-head {
    display: flex;
    align-items: center;
    height: 25px;
    padding: 0 4px 0 5px;
    background: linear-gradient(#fff, #dedede);
}

.nav-head h2 {
    flex: 1;
}

.nav-head button svg {
    width: 10px;
    height: 10px;
}

.nav-tools {
    display: flex;
    height: 24px;
    margin: 0 2px 11px 1px;
    background: linear-gradient(#fff, #ece9e0);
    border-bottom: 1px solid #aca899;
}

.nav-tools button, .panel-tools button {
    width: 22px;
    height: 22px;
}

.nav-group {
    margin-bottom: 11px;
}

.nav-group h3, .nav-group a {
    display: flex;
    align-items: center;
    height: 22px;
    color: #000;
    text-decoration: none;
    white-space: nowrap;
}

.nav-group span {
    padding-top: 8px;
}

.nav-group h3 {
    padding-left: 5px;
    gap: 10px;
    border: 1px solid transparent;
}

.nav-group h3.selected {
    font-size: 12px;
    font-weight: bold;
    border-color: #7ba2ce;
    border-radius: 3px;
    background: linear-gradient(#dfeaf6, #b9d0ea);
}

.nav-group a {
    padding-left: 41px;
    gap: 4px;
}

.nav-group a.closed {
    padding-left: 25px;
}

.nav-group a.disabled {
    color: #a5a296;
}

.tri {
    width: 6px;
    height: 6px;
    fill: #333;
}

.exp {
    width: 6px;
    height: 8px;
    margin-right: 6px;
    fill: #fff;
    stroke: #888;
}

.splitter {
    display: flex;
    align-items: center;
    justify-content: center;
    width: 9px;
    flex: none;
}

.grip {
    width: 36px;
    height: 2px;
    background: repeating-linear-gradient(90deg, #aca899 0 2px, transparent 2px 4px);
}

.grip-v {
    width: 2px;
    height: 36px;
    background: repeating-linear-gradient(#aca899 0 2px, transparent 2px 4px);
}

.workspace {
    flex: 1;
    min-width: 0;
    display: flex;
    flex-direction: column;
    margin-right: 1px;
    padding: 1px 2px 2px 1px;
    background: #fffbe9;
    border: 1px solid #aca899;
}

.view-bar {
    display: flex;
    align-items: center;
    gap: 6px;
    height: 23px;
    flex: none;
    margin-bottom: 1px;
    padding: 0 5px 0 8px;
    background: linear-gradient(#e3eef9, #b7cfe8);
    border: 1px solid #7ba2ce;
    border-radius: 2px;
}

.view-bar strong {
    font-size: 12px;
}

.muted {
    color: #888;
}

.view-bar button {
    margin-left: auto;
}

.view-bar svg {
    width: 11px;
    height: 11px;
}

.upper {
    flex: 51 1 0;
    display: flex;
    min-height: 0;
}

.left-col {
    display: flex;
    flex-direction: column;
    width: 396px;
    flex: none;
}

.col-grip {
    display: flex;
    align-items: center;
    width: 4px;
    flex: none;
    padding-left: 1px;
}

.row-grip {
    display: flex;
    align-items: center;
    justify-content: center;
    height: 6px;
    flex: none;
}

/* panels */
.panel {
    display: flex;
    flex-direction: column;
    min-height: 0;
    background: #ece9d8;
}

.panel-head {
    display: flex;
    align-items: center;
    height: 20px;
    flex: none;
    padding: 0 8px 0 6px;
    background: linear-gradient(#fff, #dedacb);
}

.panel-head h2 {
    flex: 1;
}

.panel-head button, .summary-head > button {
    width: 20px;
    height: 18px;
}

.panel-head button svg, .summary-head > button svg {
    width: 10px;
    height: 10px;
}

.panel-tools {
    display: flex;
    align-items: center;
    height: 25px;
    flex: none;
    margin: 0 2px;
    background: linear-gradient(#fff, #ece9e0);
    border-bottom: 1px solid #aca899;
}

.panel-tools .on {
    border: 1px solid #b5a078;
    background: #ffb866;
}

.sources {
    flex: 297 1 0;
    border: 3px solid #f5a95a;
    outline: 1px solid #c9a37a;
    outline-offset: -1px;
}

.sources .panel-head {
    background: linear-gradient(#ffd08c, #ffae58);
}

.tree {
    flex: 1;
    min-height: 0;
    margin: 3px 3px 3px 4px;
    overflow: hidden;
    list-style: none;
    background: #fff;
    border: 1px solid #7f9db9;
}

.tree li {
    display: flex;
    align-items: center;
    gap: 3px;
    height: 16px;
    padding-left: 3px;
    white-space: pre;
}

.tree i {
    font-style: normal;
    color: #777;
}

.tree b {
    font-weight: normal;
    padding: 0 3px 0 1px;
    color: #fff;
    background: #316ac5;
}

.lead {
    width: 17px;
    height: 16px;
    margin-right: -5px;
}

.lead-2 {
    width: 37px;
}

.lead-run {
    width: 33px;
}

.dots {
    fill: none;
    stroke: #888;
    stroke-dasharray: 1 1;
}

.subtabs {
    display: flex;
    flex: none;
    height: 20px;
    padding-left: 4px;
}

.subtabs button {
    height: 18px;
    padding: 0 5px;
    border-right: 1px solid #aca899;
}

.subtabs button.active {
    font-size: 12px;
    font-weight: bold;
    padding: 0 4px;
    background: #fff;
    border: 1px solid #aca899;
}

/* tabs below the panels */
.tabs {
    display: flex;
    flex: none;
    height: 21px;
    padding-left: 8px;
}

.tab {
    --tab-fill: #f8f6ee;
    align-items: stretch;
    height: 21px;
}

.tab > span {
    display: flex;
    align-items: center;
    gap: 4px;
    padding: 0 6px;
    background: var(--tab-fill);
    border-right: 1px solid #aca899;
    border-bottom: 1px solid #aca899;
    border-radius: 0 0 3px 3px;
}

.tab.active {
    font-size: 12px;
    font-weight: bold;
}

.slant {
    width: 20px;
    height: 21px;
}

.slant + span {
    padding-left: 2px;
}

.dock-tabs .active {
    --tab-fill: #ffb566;
}

.bottom-tabs {
    border-top: 1px solid #aca899;
}

.bottom-tabs .active {
    --tab-fill: #fffdf5;
    margin-left: -13px;
}

.bottom-tabs .tab {
    height: 20px;
}

.bottom-tabs .reports > span {
    border-right: none;
}

/* properties panel */
.props {
    flex: 266 1 0;
    padding: 3px 3px 2px;
    border: 1px solid #f4f0e2;
    background: #ece9d8;
}

.props-name {
    display: flex;
    align-items: center;
    gap: 4px;
    height: 21px;
    flex: none;
    padding-left: 2px;
}

.props-box {
    flex: 1;
    min-height: 0;
    display: flex;
    flex-direction: column;
    padding: 4px 3px 0;
    border: 1px solid #aca899;
}

.props-box .subtabs {
    height: 23px;
    padding: 3px 0 0 1px;
}

.scroll-area {
    flex: 1;
    min-height: 0;
    display: grid;
    grid-template-columns: minmax(0, 1fr) 16px;
    grid-template-rows: minmax(0, 1fr) 16px;
    border: 1px solid #7f9db9;
}

.props-list {
    display: grid;
    grid-template-columns: 133px 1fr;
    grid-template-rows: 24px 24px 24px;
    grid-auto-rows: 21px;
    align-items: center;
    padding: 6px 0 0 9px;
    overflow: hidden;
    white-space: nowrap;
}

.module {
    padding-left: 60px;
}

.type-combo {
    width: 124px;
    height: 20px;
    padding: 0 6px 0 4px;
    color: #a5a296;
}

/* scrollbars */
.hscroll, .vscroll {
    display: flex;
    flex: 1;
    background: #f3f1ea;
}

.hscroll {
    height: 16px;
}

.vscroll {
    flex-direction: column;
}

.hscroll button, .vscroll button {
    flex: none;
    width: 16px;
    height: 16px;
    border: 1px solid #fff;
    border-radius: 2px;
    background: #bfd0f8;
}

.hscroll button svg, .vscroll button svg {
    width: 9px;
    height: 9px;
    fill: none;
    stroke: #3d5478;
    stroke-width: 2;
}

.track {
    flex: 1;
    min-width: 0;
    min-height: 0;
}

.thumb {
    display: flex;
    align-items: center;
    justify-content: center;
    height: 100%;
    border: 1px solid #fff;
    border-radius: 2px;
    outline: 1px solid #a8bfec;
    outline-offset: -2px;
    background: #c1d2fb;
}

.thumb::after {
    content: "";
    width: 8px;
    height: 6px;
    background: repeating-linear-gradient(90deg, #eef4fe 0 1px, #8ca8de 1px 2px);
}

.vscroll .thumb::after {
    width: 6px;
    height: 8px;
    background: repeating-linear-gradient(#eef4fe 0 1px, #8ca8de 1px 2px);
}

.corner {
    width: 13px;
    height: 13px;
    margin: 1px;
    border: 1px solid #8a8778;
    box-shadow: inset 0 0 0 2px #ece9d8, inset 0 0 0 3px #8a8778;
}

/* project summary */
.summary {
    flex: 1;
    min-width: 0;
    display: flex;
    flex-direction: column;
    border: 1px solid #6b695f;
    border-width: 2px 2px 2px 1px;
    background: #ece9d8;
}

.summary-head {
    display: flex;
    align-items: center;
    height: 22px;
    flex: none;
    padding: 0 14px 0 8px;
    background: #fff;
    border-bottom: 1px solid #aca899;
}

.summary-tab {
    display: flex;
    align-items: center;
    align-self: flex-end;
    gap: 3px;
    height: 20px;
    margin-right: auto;
    padding: 0 5px 0 4px;
    background: #fbfaf5;
    border: 1px solid #aca899;
    border-bottom: none;
    border-radius: 5px 3px 0 0;
}

.summary-tab h2 {
    font-size: 12px;
    font-weight: bold;
}

.summary-tab button {
    margin-left: 6px;
}

.summary-tab button svg {
    width: 11px;
    height: 11px;
}

.summary-main {
    flex: 1;
    min-height: 0;
    display: flex;
    padding: 2px 2px 3px 4px;
}

.side-tools {
    display: flex;
    flex-direction: column;
    align-items: center;
    width: 24px;
    flex: none;
    background: linear-gradient(90deg, #fff, #e6e2d2);
}

.side-tools button {
    height: 22px;
}

.summary-box {
    flex: 1;
    min-width: 0;
    display: flex;
    flex-direction: column;
    border: 1px solid #7f9db9;
    background: #ece9d8;
}

.summary-box .hscroll {
    flex: none;
}

.cards {
    flex: 1;
    min-height: 0;
    display: grid;
    grid-template-columns: 404px minmax(208px, 1fr);
    align-content: start;
    column-gap: 6px;
    padding: 5px 0 0 3px;
    overflow: hidden;
}

.card {
    min-height: 114px;
    background: #fff;
}

.card header {
    display: flex;
    align-items: center;
    height: 24px;
    padding: 0 8px 0 6px;
    background: #f4f4f4;
    border-bottom: 1px solid #ddd;
}

.card h3 {
    margin-left: 7px;
    padding-top: 5px;
    font-size: 12px;
    font-weight: bold;
}

.card header a {
    margin-left: auto;
}

.card header button {
    margin-left: auto;
}

.card header a + button {
    margin-left: 7px;
}

.card header em {
    margin-left: 9px;
    padding-top: 5px;
    font-size: 11px;
    font-style: normal;
    font-weight: bold;
    color: #888;
}

.card a {
    color: #1a5a9e;
}

.card dl {
    display: grid;
    grid-template-columns: 63px 1fr;
    grid-auto-rows: 21px;
    align-items: center;
    padding: 3px 0 0 7px;
    white-space: nowrap;
}

.card dl.wide {
    grid-template-columns: 108px 1fr;
}

.card dl.counts {
    grid-template-columns: 73px 1fr;
}

.run-card {
    min-height: 101px;
    margin-bottom: 6px;
}

.run-card header {
    padding-left: 3px;
}

.run-card h3 {
    margin-left: 4px;
}

.run-card dl {
    padding-top: 9px;
}

.full {
    grid-column: 1 / -1;
    min-height: 51px;
    margin-bottom: 6px;
}

.full p {
    padding: 6px 0 0 9px;
}

.timing {
    min-height: 73px;
}

.timing p {
    padding-left: 7px;
}

.timing .next {
    display: flex;
    gap: 16px;
    padding-top: 5px;
}

/* design runs */
.runs {
    flex: 19 1 0;
    min-height: 0;
    display: flex;
    flex-direction: column;
    padding: 3px 2px 2px 3px;
    background: #f4f0e2;
}

.runs-main {
    flex: 1;
    min-height: 0;
    display: flex;
}

.runs-box {
    flex: 1;
    min-width: 0;
    display: flex;
    flex-direction: column;
    background: #fff;
    border: 1px solid #7f9db9;
}

.table-wrap {
    flex: 1;
    min-height: 0;
    overflow: hidden;
}

.runs table {
    width: 100%;
    table-layout: fixed;
    border-collapse: collapse;
    white-space: nowrap;
}

.c-name { width: 198px; }
.c-part { width: 94px; }
.c-con { width: 89px; }
.c-strat { width: 167px; }
.c-status { width: 70px; }
.c-prog { width: 130px; }
.c-start { width: 120px; }
.c-ela { width: 65px; }

.runs th {
    height: 21px;
    padding: 0 0 0 9px;
    font-weight: normal;
    text-align: left;
    background: #ece9d8;
    border-right: 1px solid #c9c5b2;
    border-bottom: 2px solid #d6d2c0;
}

.runs th:first-child {
    padding-left: 7px;
}

.runs td {
    height: 16px;
    padding: 0 0 0 3px;
    overflow: hidden;
    border-right: 1px solid #ece9e0;
}

.runs tbody tr:nth-child(2) {
    background: #f0f0f0;
}

.cell {
    display: flex;
    align-items: center;
    gap: 4px;
}

.bar {
    width: 94px;
    height: 10px;
    margin-left: 2px;
    border: 1px solid #000;
}

.hscroll-row {
    display: flex;
    flex: none;
    background: #ece9d8;
}

/* status bar */
.statusbar {
    position: relative;
    display: flex;
    justify-content: flex-end;
    align-items: center;
    height: 27px;
    flex: none;
    padding: 4px 12px 0 0;
    border-top: 1px solid #fff;
}

.watermark {
    position: absolute;
    right: 8px;
    top: 2px;
    font-size: 17px;
    color: #c4c0b2;
}

.tray {
    position: relative;
    display: flex;
    align-items: center;
    gap: 3px;
    height: 21px;
    padding: 0 1px;
    border: 1px solid #c3cddb;
    background: rgba(255, 255, 255, 0.5);
}

.tray svg {
    width: 18px;
    height: 18px;
}

.tray span {
    font-size: 17px;
    font-weight: bold;
    color: #3a7ec4;
}

.taskbar {
    display: flex;
    justify-content: space-between;
    height: 4px;
    flex: none;
    background: #2b6fe3;
}

.start {
    width: 94px;
    background: #3b9a3b;
}

.clock {
    width: 113px;
    background: #17a4ee;
}

.ball {
    position: absolute;
    right: -24px;
    top: 747px;
    width: 36px;
    height: 36px;
    border: 2px solid #d5d5d5;
    border-radius: 50%;
    background: radial-gradient(circle at 40% 30%, #8be08b, #2d9c34 60%);
}
```
